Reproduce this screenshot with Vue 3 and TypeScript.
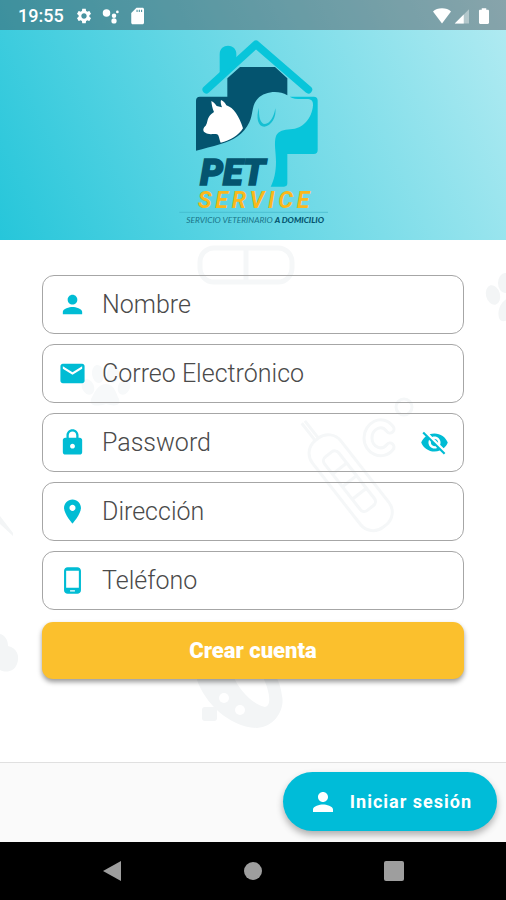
<script setup lang="ts">
import { computed, reactive, ref } from 'vue'

type FieldKey = 'nombre' | 'correo' | 'password' | 'direccion' | 'telefono'

interface Field {
  key: FieldKey
  label: string
  type: string
  icon: string
}

const PERSON =
  'M12 12c2.21 0 4-1.79 4-4s-1.79-4-4-4-4 1.79-4 4 1.79 4 4 4zm0 2c-2.67 0-8 1.34-8 4v2h16v-2c0-2.66-5.33-4-8-4z'
const EYE_OFF =
  'M12 7c2.76 0 5 2.24 5 5 0 .65-.13 1.26-.36 1.83l2.92 2.92c1.51-1.26 2.7-2.89 3.43-4.75-1.73-4.39-6-7.5-11-7.5-1.4 0-2.74.25-3.98.7l2.16 2.16C10.74 7.13 11.35 7 12 7zM2 4.27l2.28 2.28.46.46C3.08 8.3 1.78 10.02 1 12c1.73 4.39 6 7.5 11 7.5 1.55 0 3.03-.3 4.38-.84l.42.42L19.73 22 21 20.73 3.27 3 2 4.27zM7.53 9.8l1.55 1.55c-.05.21-.08.43-.08.65 0 1.66 1.34 3 3 3 .22 0 .44-.03.65-.08l1.55 1.55c-.67.33-1.41.53-2.2.53-2.76 0-5-2.24-5-5 0-.79.2-1.53.53-2.2zm4.31-.78l3.15 3.15.02-.16c0-1.66-1.34-3-3-3l-.17.01z'
const EYE =
  'M12 4.5C7 4.5 2.73 7.61 1 12c1.73 4.39 6 7.5 11 7.5s9.27-3.11 11-7.5c-1.73-4.39-6-7.5-11-7.5zM12 17c-2.76 0-5-2.24-5-5s2.24-5 5-5 5 2.24 5 5-2.24 5-5 5zm0-8c-1.66 0-3 1.34-3 3s1.34 3 3 3 3-1.34 3-3-1.34-3-3-3z'

const fields: Field[] = [
  { key: 'nombre', label: 'Nombre', type: 'text', icon: PERSON },
  {
    key: 'correo',
    label: 'Correo Electrónico',
    type: 'email',
    icon: 'M20 4H4c-1.1 0-1.99.9-1.99 2L2 18c0 1.1.9 2 2 2h16c1.1 0 2-.9 2-2V6c0-1.1-.9-2-2-2zm0 4l-8 5-8-5V6l8 5 8-5v2z',
  },
  {
    key: 'password',
    label: 'Password',
    type: 'password',
    icon: 'M18 8h-1V6c0-2.76-2.24-5-5-5S7 3.24 7 6v2H6c-1.1 0-2 .9-2 2v10c0 1.1.9 2 2 2h12c1.1 0 2-.9 2-2V10c0-1.1-.9-2-2-2zm-6 9c-1.1 0-2-.9-2-2s.9-2 2-2 2 .9 2 2-.9 2-2 2zm3.1-9H8.9V6c0-1.71 1.39-3.1 3.1-3.1 1.71 0 3.1 1.39 3.1 3.1v2z',
  },
  {
    key: 'direccion',
    label: 'Dirección',
    type: 'text',
    icon: 'M12 2C8.13 2 5 5.13 5 9c0 5.25 7 13 7 13s7-7.75 7-13c0-3.87-3.13-7-7-7zm0 9.5c-1.38 0-2.5-1.12-2.5-2.5s1.12-2.5 2.5-2.5 2.5 1.12 2.5 2.5-1.12 2.5-2.5 2.5z',
  },
  {
    key: 'telefono',
    label: 'Teléfono',
    type: 'tel',
    icon: 'M16 1H8C6.34 1 5 2.34 5 4v16c0 1.66 1.34 3 3 3h8c1.66 0 3-1.34 3-3V4c0-1.66-1.34-3-3-3zm-2 20h-4v-1h4v1zm3.25-3H6.75V4h10.5v14z',
  },
]

const form = reactive<Record<FieldKey, string>>({
  nombre: '',
  correo: '',
  password: '',
  direccion: '',
  telefono: '',
})

const showPassword = ref(false)
const eyeIcon = computed(() => (showPassword.value ? EYE : EYE_OFF))

function inputType(field: Field): string {
  return field.key === 'password' && showPassword.value ? 'text' : field.type
}
</script>

<template>
  <div class="screen">
    <header class="hero">
      <div class="status">
        <span class="clock">19:55</span>
        <svg class="status-icon" viewBox="0 0 24 24" aria-hidden="true">
          <path
            d="M19.14 12.94c.04-.3.06-.61.06-.94 0-.32-.02-.64-.07-.94l2.03-1.58c.18-.14.23-.41.12-.61l-1.92-3.32c-.12-.22-.37-.29-.59-.22l-2.39.96c-.5-.38-1.03-.7-1.62-.94l-.36-2.54c-.04-.24-.24-.41-.48-.41h-3.84c-.24 0-.43.17-.47.41l-.36 2.54c-.59.24-1.13.57-1.62.94l-2.39-.96c-.22-.08-.47 0-.59.22L2.74 8.87c-.12.21-.08.47.12.61l2.03 1.58c-.05.3-.09.63-.09.94s.02.64.07.94l-2.03 1.58c-.18.14-.23.41-.12.61l1.92 3.32c.12.22.37.29.59.22l2.39-.96c.5.38 1.03.7 1.62.94l.36 2.54c.05.24.24.41.48.41h3.84c.24 0 .44-.17.47-.41l.36-2.54c.59-.24 1.13-.56 1.62-.94l2.39.96c.22.08.47 0 .59-.22l1.92-3.32c.12-.22.07-.47-.12-.61l-2.01-1.58zM12 15.6c-1.98 0-3.6-1.62-3.6-3.6s1.62-3.6 3.6-3.6 3.6 1.62 3.6 3.6-1.62 3.6-3.6 3.6z"
          />
        </svg>
        <svg class="status-icon" viewBox="0 0 24 24" aria-hidden="true">
          <circle cx="6" cy="8" r="5" />
          <circle cx="16" cy="11.5" r="3" />
          <circle cx="16" cy="18.5" r="3.5" />
          <circle cx="20.5" cy="6.5" r="1.8" />
        </svg>
        <svg class="status-icon" viewBox="0 0 24 24" aria-hidden="true">
          <path
            d="M18 1h-8L3 8v13c0 1.1.9 2 2 2h13c1.1 0 2-.9 2-2V3c0-1.1-.9-2-2-2zM11.5 6.5h-1.5v-3h1.5v3zm3 0h-1.5v-3h1.5v3zm3 0h-1.5v-3h1.5v3z"
          />
        </svg>
        <span class="spacer"></span>
        <div class="status-group">
          <svg class="status-icon" viewBox="0 0 24 24" aria-hidden="true">
            <path d="M12 22 0 6C3 3.3 7 1.8 12 1.8S21 3.3 24 6z" />
          </svg>
          <svg class="status-icon" viewBox="0 0 24 24" aria-hidden="true">
            <path d="M1 22 20 3v19z" opacity=".4" />
            <path d="M1 22 13 10v12z" />
          </svg>
          <svg class="status-icon" viewBox="0 0 24 24" aria-hidden="true">
            <path
              d="M17 3.5h-2V1.5H9v2H7c-1 0-1.7.7-1.7 1.7v15.6c0 1 .7 1.7 1.7 1.7h10c1 0 1.7-.7 1.7-1.7V5.2c0-1-.7-1.7-1.7-1.7z"
            />
          </svg>
        </div>
      </div>

      <svg class="logo" viewBox="-6 0 510 600" role="img" aria-label="Pet Service">
        <path
          class="navy"
          d="M172 130 210 96H315L352 130V181C325 165 285 169 263 191C244 211 250 238 238 262C221 299 190 316 152 327C125 335 102 341 78 347V197Q78 185 90 185H172Z"
        />
        <path
          class="aqua"
          d="M359 185H431Q443 185 443 197V345Q443 357 431 357H352V445Q352 455 342 455H302C312 436 318 410 318 380C318 350 311 325 318 303C325 287 342 285 361 283C399 282 426 250 429 211C430 194 421 191 404 192C387 193 371 192 359 185Z"
        />
        <path class="roof" d="M109 164 258 28 415 164" />
        <path class="aqua" d="M149 126V57C149 24 199 24 199 57V83Z" />
        <path
          class="white"
          d="M124 198C131 202 137 208 140 213L156 217C153 209 151 202 153 195C161 198 166 204 169 211C191 218 207 243 219 280C207 300 180 318 152 323C149 316 148 307 144 299C132 294 117 302 104 292C97 286 100 278 107 272C113 264 111 253 117 245C121 238 127 235 132 231C127 219 125 210 124 198Z"
        />
        <path
          class="ear"
          d="M267 218C257 247 264 275 283 275C304 273 320 246 316 220C311 249 299 266 285 267C270 266 266 244 267 218Z"
        />
        <text class="pet" x="91" y="451">PET</text>
        <text class="service" x="83" y="519">SERVICE</text>
        <path class="rule" d="M28 532H474" />
        <text class="tagline" x="49" y="565">
          SERVICIO VETERINARIO <tspan class="strong">A DOMICILIO</tspan>
        </text>
      </svg>
    </header>

    <main class="content">
      <svg class="pattern" viewBox="0 240 506 522" preserveAspectRatio="xMidYMin slice" aria-hidden="true">
        <g class="outline thick">
          <rect x="200" y="248" width="92" height="34" rx="14" />
          <path d="M246 248v34" />
        </g>
        <g class="solid">
          <ellipse cx="493" cy="295" rx="7" ry="10" transform="rotate(-15 493 295)" />
          <ellipse cx="505" cy="283" rx="7" ry="10" />
          <path d="M508 298C500 302 497 311 499 318C501 323 506 321 510 319Z" />
          <path d="M0 634C5 635 8 640 8 646C17 648 20 656 17 664C14 672 6 673 0 670Z" />
          <path d="M0 516 13 533V536L0 524Z" />
          <path
            fill-rule="evenodd"
            d="M197 680C205 703 229 727 257 728C276 727 285 708 282 696C281 688 279 681 275 675H233C239 691 254 705 265 707C272 706 270 691 262 675H197Z"
          />
          <rect x="202" y="707" width="15" height="14" rx="3" />
        </g>
        <g class="solid pale">
          <ellipse cx="88" cy="387" rx="6" ry="8" transform="rotate(-25 88 387)" />
          <ellipse cx="98" cy="374" rx="6" ry="9" transform="rotate(-8 98 374)" />
          <ellipse cx="113" cy="374" rx="6" ry="9" transform="rotate(8 113 374)" />
          <ellipse cx="124" cy="387" rx="6" ry="8" transform="rotate(25 124 387)" />
          <path d="M106 384C97 384 94 394 91 399C89 406 96 407 106 404C116 407 121 405 119 399C116 394 115 384 106 384Z" />
        </g>
        <g class="dots">
          <circle cx="224" cy="698" r="5" />
          <circle cx="240" cy="710" r="5" />
        </g>
        <g class="outline">
          <circle cx="404" cy="407" r="8" />
          <path d="M390 429C382 418 368 426 368 438C368 450 382 457 390 447" class="letter-ring" />
          <path d="M390 429C382 418 368 426 368 438C368 450 382 457 390 447" class="letter-core" />
          <g transform="translate(347 478) rotate(-38)">
            <rect x="-18" y="-49" width="36" height="110" rx="16" />
            <rect x="-9" y="-30" width="18" height="68" rx="5" />
            <path d="M-9-12H9M-9 4H9M-9 20H9M-2-49V-71M2-49V-71" />
          </g>
        </g>
      </svg>

      <form class="form" @submit.prevent>
        <label v-for="field in fields" :key="field.key" class="field">
          <svg class="icon" viewBox="0 0 24 24" aria-hidden="true"><path :d="field.icon" /></svg>
          <input
            v-model="form[field.key]"
            class="input"
            :type="inputType(field)"
            :name="field.key"
            :placeholder="field.label"
            :aria-label="field.label"
          />
          <button
            v-if="field.key === 'password'"
            class="toggle"
            type="button"
            aria-label="Mostrar password"
            :aria-pressed="showPassword"
            @click="showPassword = !showPassword"
          >
            <svg class="icon" viewBox="0 0 24 24" aria-hidden="true"><path :d="eyeIcon" /></svg>
          </button>
        </label>
        <button class="submit" type="submit">Crear cuenta</button>
      </form>
    </main>

    <footer class="bottom-bar">
      <button class="fab" type="button">
        <svg class="fab-icon" viewBox="0 0 24 24" aria-hidden="true"><path :d="PERSON" /></svg>
        <span>Iniciar sesión</span>
      </button>
    </footer>

    <nav class="system-nav" aria-label="Sistema">
      <button type="button" aria-label="Atrás">
        <svg viewBox="0 0 24 24" aria-hidden="true"><path d="M3 12 21 2v20z" /></svg>
      </button>
      <button type="button" aria-label="Inicio">
        <svg viewBox="0 0 24 24" aria-hidden="true"><circle cx="12" cy="12" r="9" /></svg>
      </button>
      <button type="button" aria-label="Recientes">
        <svg viewBox="0 0 24 24" aria-hidden="true"><rect x="2" y="2" width="20" height="20" rx="2" /></svg>
      </button>
    </nav>
  </div>
</template>

<style>
body {
  margin: 0;
}
</style>

<style scoped>
.screen {
  display: flex;
  flex-direction: column;
  min-height: 100vh;
  background: #fff;
  font-family: Roboto, 'Liberation Sans', sans-serif;
}

.screen *,
.screen {
  box-sizing: border-box;
}

button {
  font-family: inherit;
  border: 0;
  padding: 0;
  background: none;
  cursor: pointer;
}

svg {
  display: block;
  flex: none;
}

.hero {
  display: flex;
  flex-direction: column;
  align-items: center;
  background: linear-gradient(65deg, #26c6da, #b2ebf2);
}

.status {
  display: flex;
  align-items: center;
  align-self: stretch;
  gap: 9px;
  height: 30px;
  padding: 2px 13px 0 18px;
  background: rgba(60, 40, 45, 0.36);
  color: #fff;
}

.clock {
  margin-right: 2px;
  font-size: 18px;
  line-height: 20px;
  font-weight: 500;
}

.status-icon {
  width: 18px;
  height: 18px;
  fill: #fff;
}

.spacer {
  flex: 1;
}

.status-group {
  display: flex;
  gap: 3px;
}

.logo {
  width: 170px;
  height: 200px;
  margin: 5px 0;
}

.navy {
  fill: #04546f;
}

.aqua {
  fill: #08c5da;
}

.white {
  fill: #fff;
}

.ear {
  fill: #16bfd2;
}

.roof {
  fill: none;
  stroke: #08c5da;
  stroke-width: 23px;
  stroke-linecap: round;
  stroke-linejoin: round;
}

.pet {
  font: italic 900 108px Roboto, sans-serif;
  fill: #04546f;
  stroke: #04546f;
  stroke-width: 5px;
}

.service {
  font: italic 700 70px Roboto, sans-serif;
  letter-spacing: 11px;
  fill: #fab81c;
}

.rule {
  stroke: #3fb4c8;
  stroke-width: 2px;
}

.tagline {
  font: italic 400 25px Lato, sans-serif;
  fill: #1a7488;
}

.strong {
  font-weight: 900;
  fill: #04546f;
}

.content {
  position: relative;
  flex: 1;
  padding: 35px 42px 40px;
}

.pattern {
  position: absolute;
  inset: 0;
  width: 100%;
  height: 100%;
}

.solid {
  fill: #f3f5f6;
}

.pale {
  fill: #f7f9fa;
}

.dots {
  fill: #fff;
}

.outline {
  fill: none;
  stroke: #f5f7f8;
  stroke-width: 3px;
  stroke-linejoin: round;
}

.thick {
  stroke-width: 5px;
}

.letter-ring {
  stroke-width: 11px;
  stroke-linecap: round;
}

.letter-core {
  stroke: #fff;
  stroke-width: 5px;
  stroke-linecap: round;
}

.form {
  position: relative;
  display: flex;
  flex-direction: column;
  gap: 10px;
}

.field {
  display: flex;
  align-items: center;
  height: 59px;
  padding: 0 14px 0 15px;
  border: 1px solid #a6a6a6;
  border-radius: 12px;
}

.icon {
  width: 29px;
  height: 29px;
  fill: #00bcd4;
}

.input {
  flex: 1;
  min-width: 0;
  height: 100%;
  margin-left: 15px;
  padding: 0;
  border: 0;
  outline: 0;
  background: transparent;
  font-family: inherit;
  font-size: 25px;
  font-weight: 300;
  color: #333;
}

.input::placeholder {
  color: #4a4a4a;
  opacity: 1;
}

.submit {
  height: 57px;
  margin-top: 2px;
  border-radius: 11px;
  background: #fbc02d;
  box-shadow: 0 3px 5px rgba(0, 0, 0, 0.4);
  color: #fff;
  font-size: 22px;
  font-weight: 900;
}

.bottom-bar {
  display: flex;
  justify-content: flex-end;
  padding: 9px 9px 11px;
  border-top: 1px solid #e0e0e0;
  background: #fafafa;
}

.fab {
  display: flex;
  align-items: center;
  gap: 12px;
  height: 59px;
  padding: 0 25px;
  border-radius: 30px;
  background: #00bcd8;
  box-shadow: 0 4px 7px rgba(0, 0, 0, 0.3);
  color: #fff;
  font-size: 18px;
  font-weight: 700;
  letter-spacing: 1px;
}

.fab-icon {
  width: 30px;
  height: 30px;
  fill: #fff;
}

.system-nav {
  display: flex;
  justify-content: center;
  gap: 117px;
  padding: 17px 0;
  background: #000;
}

.system-nav svg {
  width: 24px;
  height: 24px;
  fill: #9e9e9e;
}
</style>
